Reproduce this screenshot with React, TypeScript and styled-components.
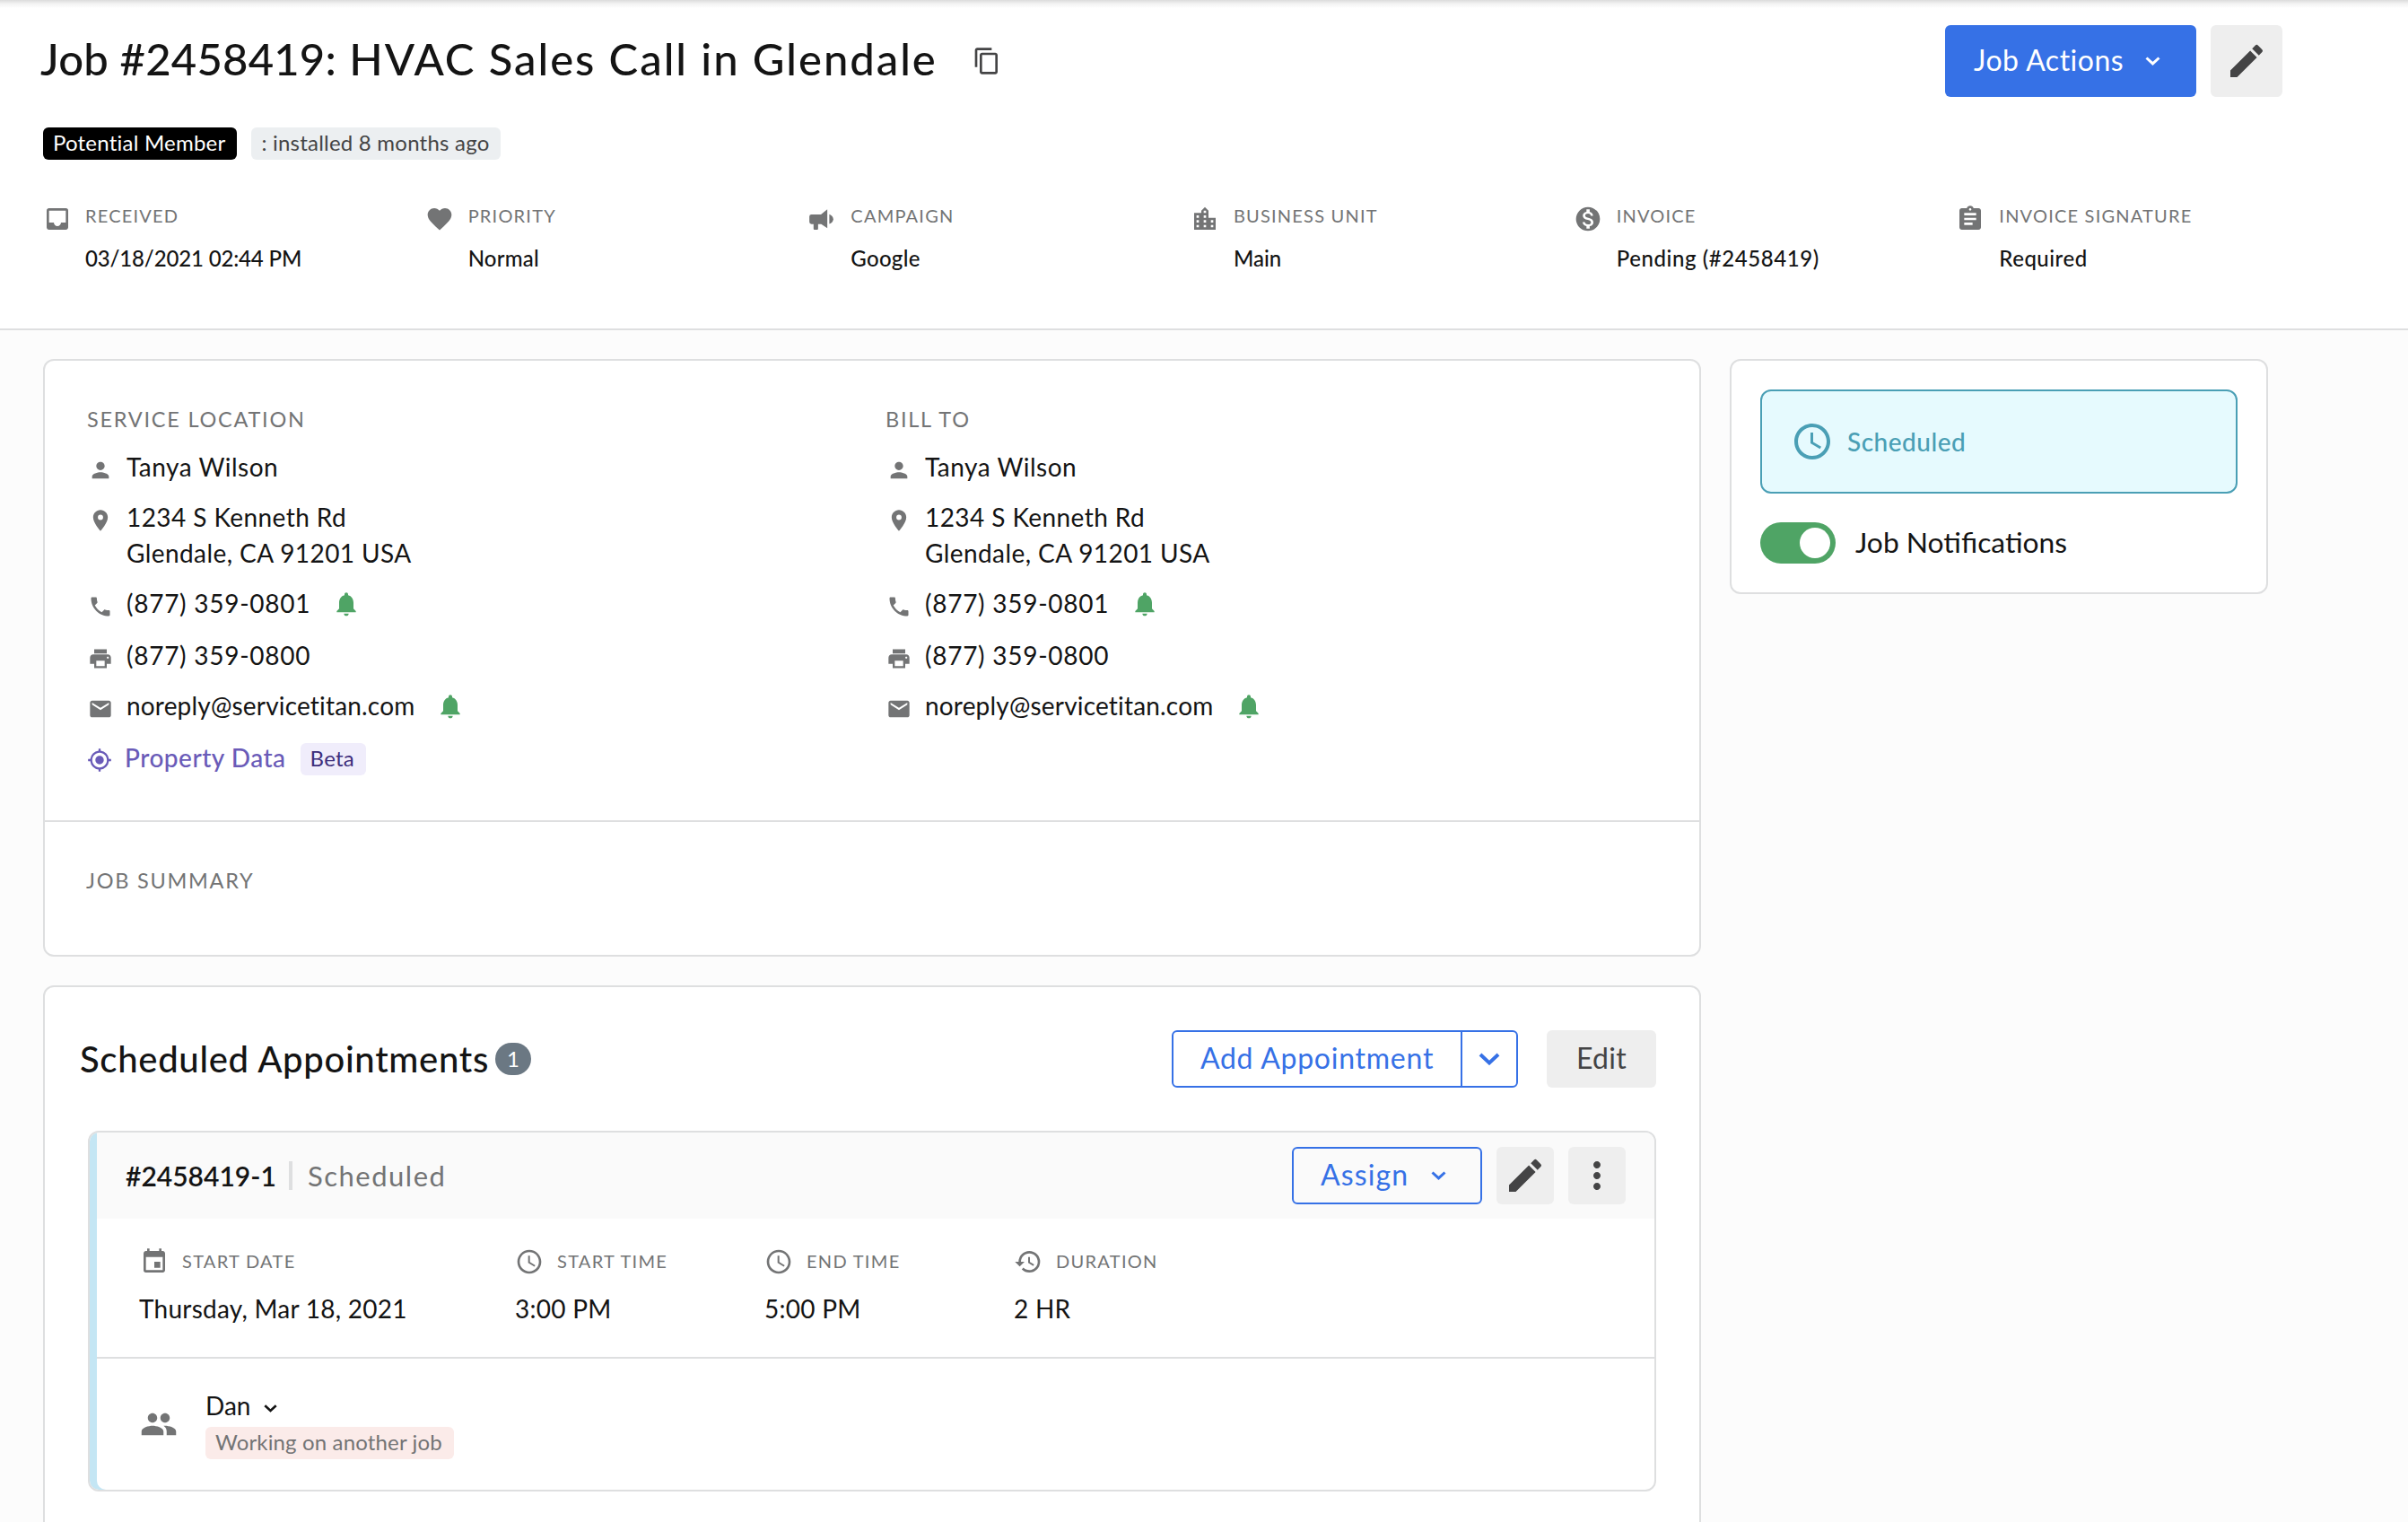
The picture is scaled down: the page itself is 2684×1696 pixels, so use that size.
import React from "react";
import styled, { createGlobalStyle } from "styled-components";
import {
  MdContentCopy,
  MdEdit,
  MdInbox,
  MdFavorite,
  MdLocationCity,
  MdMonetizationOn,
  MdAssignment,
  MdPerson,
  MdPlace,
  MdPhone,
  MdPrint,
  MdEmail,
  MdMyLocation,
  MdAccessTime,
  MdEvent,
  MdHistory,
  MdPeople,
  MdMoreVert,
} from "react-icons/md";

const SANS = `Lato, "Open Sans", sans-serif`;

interface SpacingProps {
  $ls?: number;
}

interface ChevronProps {
  width: number;
  stroke: number;
}

const Chevron: React.FC<ChevronProps> = ({ width, stroke }) => (
  <svg width={width} height={width * 0.6} viewBox={`0 0 ${width} ${width * 0.6}`} fill="none">
    <path
      d={`M${stroke / 2} ${stroke / 2} L${width / 2} ${width * 0.6 - stroke * 0.75} L${width - stroke / 2} ${stroke / 2}`}
      stroke="currentColor"
      strokeWidth={stroke}
    />
  </svg>
);

const Megaphone: React.FC = () => (
  <svg width="32" height="32" viewBox="0 0 24 24" fill="currentColor">
    <path d="M16.600 4v15.700L11.500 16.300H8.900V20.200a.8.8 0 0 1-.8.8H5.900a.8.8 0 0 1-.8-.8V16.300H3.400A1.800 1.800 0 0 1 1.600 14.500V10A1.800 1.800 0 0 1 3.400 8.200H11.300z" />
    <path d="M18.300 8v8.200c1.900-.7 3.300-2.200 3.300-4.100S20.200 8.700 18.300 8z" />
  </svg>
);

const Bell: React.FC = () => (
  <BellIcon width="32" height="32" viewBox="0 0 24 24" fill="currentColor">
    <path d="M12 22c1.100 0 2-.9 2-2h-4c0 1.100.89 2 2 2zm6-6v-5c0-3.070-1.640-5.640-4.500-6.320V4c0-.83-.67-1.500-1.500-1.500s-1.500.67-1.500 1.500v.68C7.630 5.360 6 7.920 6 11v5l-2 2v1h16v-1l-2-2z" />
  </BellIcon>
);

const jobFacts = [
  { icon: <MdInbox />, label: "RECEIVED", value: "03/18/2021 02:44 PM", spacing: -0.15 },
  { icon: <MdFavorite />, label: "PRIORITY", value: "Normal", spacing: 0.2 },
  { icon: <Megaphone />, label: "CAMPAIGN", value: "Google", spacing: 0.3 },
  { icon: <MdLocationCity />, label: "BUSINESS UNIT", value: "Main", spacing: 0 },
  { icon: <MdMonetizationOn />, label: "INVOICE", value: "Pending (#2458419)", spacing: 0.58 },
  { icon: <MdAssignment />, label: "INVOICE SIGNATURE", value: "Required", spacing: 0.5 },
];

const times = [
  { icon: <MdEvent />, label: "START DATE", value: "Thursday, Mar 18, 2021" },
  { icon: <MdAccessTime />, label: "START TIME", value: "3:00 PM" },
  { icon: <MdAccessTime />, label: "END TIME", value: "5:00 PM" },
  { icon: <MdHistory />, label: "DURATION", value: "2 HR" },
];

interface ContactProps {
  heading: string;
  children?: React.ReactNode;
}

const Contact: React.FC<ContactProps> = ({ heading, children }) => (
  <ContactColumn>
    <Heading>{heading}</Heading>
    <ContactRow $height={56} $ls={0.5}>
      <MdPerson />
      <span>Tanya Wilson</span>
    </ContactRow>
    <ContactRow $height={96}>
      <MdPlace />
      <span>
        1234 S Kenneth Rd
        <br />
        Glendale, CA 91201 USA
      </span>
    </ContactRow>
    <ContactRow $height={58} $ls={0.73}>
      <MdPhone />
      <span>(877) 359-0801</span>
      <Bell />
    </ContactRow>
    <ContactRow $height={56} $ls={0.73}>
      <MdPrint />
      <span>(877) 359-0800</span>
    </ContactRow>
    <ContactRow $height={58} $ls={0.18}>
      <MdEmail />
      <span>noreply@servicetitan.com</span>
      <Bell />
    </ContactRow>
    {children}
  </ContactColumn>
);

const App: React.FC = () => {
  return (
    <Page>
      <GlobalStyle />
      <Header>
        <TitleRow>
          <Title>
            <JobNumber>Job #2458419:</JobNumber> HVAC Sales Call in Glendale
          </Title>
          <CopyIcon />
          <HeaderActions>
            <PrimaryButton>
              <span>Job Actions</span>
              <Chevron width={17} stroke={3} />
            </PrimaryButton>
            <IconButton $size={80}>
              <MdEdit />
            </IconButton>
          </HeaderActions>
        </TitleRow>
        <TagRow>
          <Tag $bg="#000000" $color="#ffffff" $ls={0.22}>
            Potential Member
          </Tag>
          <Tag $bg="#eceff1" $color="#444445" $ls={0.22}>
            : installed 8 months ago
          </Tag>
        </TagRow>
        <Facts>
          {jobFacts.map((fact) => (
            <Fact key={fact.label}>
              {fact.icon}
              <div>
                <FactLabel>{fact.label}</FactLabel>
                <FactValue $ls={fact.spacing}>{fact.value}</FactValue>
              </div>
            </Fact>
          ))}
        </Facts>
      </Header>

      <Content>
        <MainColumn>
          <Card>
            <Contacts>
              <Contact heading="SERVICE LOCATION">
                <PropertyRow>
                  <MdMyLocation />
                  <span>Property Data</span>
                  <Tag $bg="#f0edfb" $color="#3d2e7c" $ls={0.2}>
                    Beta
                  </Tag>
                </PropertyRow>
              </Contact>
              <Contact heading="BILL TO" />
            </Contacts>
            <Summary>
              <Heading>JOB SUMMARY</Heading>
            </Summary>
          </Card>

          <Card $fill>
            <SectionHeader>
              <SectionTitle>Scheduled Appointments</SectionTitle>
              <Count>1</Count>
              <SplitButton>
                <SplitMain>Add Appointment</SplitMain>
                <SplitToggle>
                  <Chevron width={24} stroke={4} />
                </SplitToggle>
              </SplitButton>
              <GrayButton>Edit</GrayButton>
            </SectionHeader>
            <Appointment>
              <AppointmentHeader>
                <AppointmentNumber>#2458419-1</AppointmentNumber>
                <AppointmentStatus>Scheduled</AppointmentStatus>
                <AppointmentActions>
                  <OutlineButton>
                    <span>Assign</span>
                    <Chevron width={17} stroke={3} />
                  </OutlineButton>
                  <IconButton $size={64}>
                    <MdEdit />
                  </IconButton>
                  <IconButton $size={64}>
                    <MdMoreVert />
                  </IconButton>
                </AppointmentActions>
              </AppointmentHeader>
              <Times>
                {times.map((time) => (
                  <div key={time.label}>
                    <TimeLabel>
                      {time.icon}
                      <span>{time.label}</span>
                    </TimeLabel>
                    <TimeValue>{time.value}</TimeValue>
                  </div>
                ))}
              </Times>
              <Technician>
                <MdPeople />
                <div>
                  <TechnicianName>
                    <span>Dan</span>
                    <Chevron width={15} stroke={2.6} />
                  </TechnicianName>
                  <Tag $bg="#fbebe9" $color="#737475" $ls={0.15}>
                    Working on another job
                  </Tag>
                </div>
              </Technician>
            </Appointment>
          </Card>
        </MainColumn>

        <SideCard>
          <Status>
            <MdAccessTime />
            <span>Scheduled</span>
          </Status>
          <ToggleRow>
            <Toggle>
              <Knob />
            </Toggle>
            <span>Job Notifications</span>
          </ToggleRow>
        </SideCard>
      </Content>
    </Page>
  );
};

export default App;

const GlobalStyle = createGlobalStyle`
  * {
    box-sizing: border-box;
  }

  body {
    margin: 0;
    overflow: hidden;
    font-family: ${SANS};
    color: #141414;
    background-color: #fcfcfc;
  }

  button {
    font-family: inherit;
    margin: 0;
    padding: 0;
    border: none;
  }

  svg {
    flex-shrink: 0;
    display: block;
  }
`;

const Page = styled.div`
  display: flex;
  flex-direction: column;
  width: 2684px;
  height: 1696px;
  overflow: hidden;
`;

const Header = styled.header`
  height: 368px;
  padding: 28px 76px 0 48px;
  border-bottom: 2px solid #dedfe0;
  background: linear-gradient(#dcdcdc 0, #f2f2f2 4px, #ffffff 9px);
`;

const TitleRow = styled.div`
  display: flex;
  align-items: center;
  height: 80px;
`;

const Title = styled.h1`
  width: 998px;
  margin: 0 0 6px -3px;
  font-size: 49px;
  line-height: 60px;
  font-weight: 500;
  letter-spacing: 1.95px;
  white-space: nowrap;
`;

const JobNumber = styled.span`
  letter-spacing: 0.2px;
`;

const CopyIcon = styled(MdContentCopy)`
  width: 32px;
  height: 32px;
  margin-left: 41px;
  color: #444445;
`;

const HeaderActions = styled.div`
  display: flex;
  gap: 16px;
  margin-left: auto;
  margin-right: 64px;
`;

const PrimaryButton = styled.button`
  display: flex;
  align-items: center;
  gap: 24px;
  width: 280px;
  height: 80px;
  padding-left: 32px;
  border-radius: 6px;
  font-size: 32px;
  letter-spacing: 0.5px;
  color: white;
  background-color: #3671e6;

  span {
    padding-bottom: 3px;
  }
`;

const IconButton = styled.button<{ $size: number }>`
  display: flex;
  align-items: center;
  justify-content: center;
  width: ${({ $size }) => $size}px;
  height: ${({ $size }) => $size}px;
  border-radius: 6px;
  color: #444445;
  background-color: #eeeeee;

  svg {
    width: 48px;
    height: 48px;
  }
`;

const TagRow = styled.div`
  display: flex;
  gap: 16px;
  margin-top: 34px;
`;

const Tag = styled.span<{ $bg: string; $color: string } & SpacingProps>`
  display: inline-block;
  height: 36px;
  padding: 0 13px 0 11px;
  border-radius: 6px;
  font-size: 24px;
  line-height: 34px;
  font-weight: 400;
  letter-spacing: ${({ $ls = 0 }) => $ls}px;
  white-space: nowrap;
  color: ${({ $color }) => $color};
  background-color: ${({ $bg }) => $bg};
`;

const Facts = styled.div`
  display: grid;
  grid-template-columns: repeat(6, 1fr);
  margin-top: 47px;
`;

const Fact = styled.div`
  display: flex;
  gap: 16px;
  margin-left: -1px;
  white-space: nowrap;

  > svg {
    width: 32px;
    height: 32px;
    margin-top: 3px;
    color: #737475;
  }

  &:first-child {
    gap: 15px;
    margin-left: 0;
  }
`;

const FactLabel = styled.div`
  font-size: 20px;
  line-height: 30px;
  letter-spacing: 1.2px;
  color: #737475;
`;

const FactValue = styled.div<SpacingProps>`
  margin-top: 18px;
  font-size: 24px;
  line-height: 30px;
  font-weight: 500;
  letter-spacing: ${({ $ls = 0 }) => $ls}px;
`;

const Content = styled.main`
  display: flex;
  align-items: flex-start;
  gap: 32px;
  flex: 1;
  min-height: 0;
  padding: 32px 48px 0;
`;

const MainColumn = styled.div`
  display: flex;
  flex-direction: column;
  gap: 32px;
  width: 1848px;
`;

const Card = styled.section<{ $fill?: boolean }>`
  height: ${({ $fill }) => ($fill ? "720px" : "666px")};
  border: 2px solid #dedfe0;
  border-radius: 12px;
  background-color: white;
`;

const Contacts = styled.div`
  display: grid;
  grid-template-columns: 890px 890px;
  height: 514px;
  padding: 49px 0 0 48px;
  border-bottom: 2px solid #dedfe0;
`;

const ContactColumn = styled.div`
  display: flex;
  flex-direction: column;
`;

const Heading = styled.h3`
  margin: 0 0 17px -1px;
  font-size: 23.500px;
  line-height: 32px;
  font-weight: 400;
  letter-spacing: 1.75px;
  white-space: nowrap;
  color: #737475;
`;

const ContactRow = styled.div<{ $height: number } & SpacingProps>`
  display: flex;
  height: ${({ $height }) => $height}px;
  font-size: 28px;
  line-height: 40px;
  letter-spacing: ${({ $ls = 0.42 }) => $ls}px;
  white-space: nowrap;

  > svg:first-child {
    width: 28px;
    height: 28px;
    margin: 10px 15px 0 0;
    color: #737475;
  }
`;

const BellIcon = styled.svg`
  margin: 5px 0 0 24px;
  color: #4fa465;
`;

const PropertyRow = styled.div`
  display: flex;
  height: 40px;
  font-size: 28px;
  line-height: 40px;
  font-weight: 500;
  letter-spacing: 0.5px;
  color: #6a5bb8;

  > svg {
    width: 28px;
    height: 28px;
    margin: 9px 14px 0 -1px;
  }

  ${Tag} {
    margin-left: 16px;
    margin-top: 4px;
  }
`;

const Summary = styled.div`
  padding: 49px 0 0 47px;
`;

const SectionHeader = styled.div`
  display: flex;
  align-items: center;
  height: 64px;
  margin: 48px 48px 48px 39px;
`;

const SectionTitle = styled.h2`
  margin: 0;
  font-size: 40px;
  line-height: 48px;
  font-weight: 500;
  letter-spacing: 0.7px;
  white-space: nowrap;
`;

const Count = styled.span`
  width: 40px;
  height: 36px;
  margin-left: 7px;
  border-radius: 18px;
  font-size: 24px;
  line-height: 35px;
  text-align: center;
  color: white;
  background-color: #6b7883;
`;

const SplitButton = styled.div`
  display: flex;
  width: 386px;
  height: 64px;
  margin-left: auto;
  border: 2px solid #3671e6;
  border-radius: 6px;
  color: #3671e6;
`;

const SplitMain = styled.button`
  width: 320px;
  padding-bottom: 3px;
  font-size: 32px;
  letter-spacing: 0.75px;
  white-space: nowrap;
  color: inherit;
  background: none;
`;

const SplitToggle = styled.button`
  display: flex;
  align-items: center;
  justify-content: center;
  flex: 1;
  border-left: 2px solid #3671e6;
  color: inherit;
  background: none;
`;

const GrayButton = styled.button`
  width: 122px;
  height: 64px;
  margin-left: 32px;
  padding-bottom: 3px;
  border-radius: 6px;
  font-size: 32px;
  letter-spacing: 0.3px;
  color: #444445;
  background-color: #eeeeee;
`;

const Appointment = styled.article`
  height: 402px;
  margin: 0 48px;
  border: 2px solid #dedfe0;
  border-radius: 12px;
  overflow: hidden;
  box-shadow: inset 8px 0 0 #c4e6f4;
  padding-left: 8px;
`;

const AppointmentHeader = styled.div`
  display: flex;
  align-items: center;
  height: 96px;
  padding: 0 32px;
  white-space: nowrap;
  background-color: #fafafa;
`;

const AppointmentNumber = styled.span`
  width: 186px;
  border-right: 4px solid #dedfe0;
  font-size: 30px;
  line-height: 32px;
  font-weight: 600;
`;

const AppointmentStatus = styled.span`
  padding-left: 17px;
  font-size: 31px;
  line-height: 32px;
  letter-spacing: 1.5px;
  color: #737475;
`;

const AppointmentActions = styled.div`
  display: flex;
  gap: 16px;
  margin-left: auto;
`;

const OutlineButton = styled.button`
  display: flex;
  align-items: center;
  gap: 25px;
  width: 212px;
  height: 64px;
  padding-left: 30px;
  border: 2px solid #3671e6;
  border-radius: 6px;
  font-size: 32px;
  letter-spacing: 1.1px;
  color: #3671e6;
  background: none;

  span {
    padding-bottom: 3px;
  }
`;

const Times = styled.div`
  display: grid;
  grid-template-columns: 418px 278px 278px 1fr;
  height: 156px;
  padding: 32px 0 0 48px;
  border-bottom: 2px solid #dedfe0;
  white-space: nowrap;
`;

const TimeLabel = styled.div`
  display: flex;
  align-items: center;
  gap: 15px;
  height: 32px;
  font-size: 20px;
  letter-spacing: 1.3px;
  color: #737475;

  svg {
    width: 32px;
    height: 32px;
  }

  span {
    padding-bottom: 3px;
  }
`;

const TimeValue = styled.div`
  margin: 16px 0 0 -1px;
  font-size: 28px;
  line-height: 40px;
  letter-spacing: 0.25px;

  div + div > & {
    margin-left: 0;
  }
`;

const Technician = styled.div`
  display: flex;
  align-items: flex-start;
  gap: 31px;
  padding: 34px 0 0 48px;

  > svg {
    width: 42px;
    height: 42px;
    margin-top: 18px;
    color: #737475;
  }
`;

const TechnicianName = styled.div`
  display: flex;
  align-items: center;
  gap: 15px;
  height: 40px;
  margin-bottom: 2px;
  font-size: 28px;

  span {
    padding-bottom: 4px;
  }

  svg {
    margin-top: 2px;
  }
`;

const SideCard = styled.aside`
  width: 600px;
  height: 262px;
  padding: 32px;
  border: 2px solid #dedfe0;
  border-radius: 12px;
  background-color: white;
`;

const Status = styled.div`
  display: flex;
  align-items: center;
  gap: 15px;
  height: 116px;
  padding-left: 32px;
  border: 2px solid #4a9fb5;
  border-radius: 12px;
  font-size: 28px;
  font-weight: 500;
  letter-spacing: 0.5px;
  color: #4a9fb5;
  background-color: #e6fafe;

  svg {
    width: 48px;
    height: 48px;
  }
`;

const ToggleRow = styled.div`
  display: flex;
  align-items: center;
  gap: 22px;
  margin-top: 32px;
  font-size: 31.800px;

  span {
    padding-bottom: 2px;
  }
`;

const Toggle = styled.div`
  display: flex;
  align-items: center;
  justify-content: flex-end;
  width: 84px;
  height: 46px;
  padding-right: 6px;
  border-radius: 23px;
  background-color: #4fa465;
`;

const Knob = styled.div`
  width: 34px;
  height: 34px;
  border-radius: 50%;
  background-color: white;
`;
